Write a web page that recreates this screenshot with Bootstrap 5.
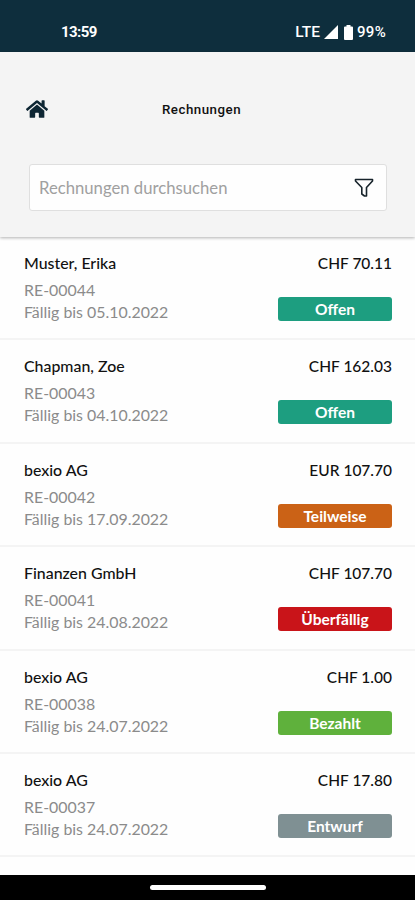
<!DOCTYPE html>
<html lang="de">
<head>
<meta charset="utf-8">
<meta name="viewport" content="width=device-width, initial-scale=1">
<title>Rechnungen</title>
<link href="https://cdn.jsdelivr.net/npm/bootstrap@5.3.0/dist/css/bootstrap.min.css" rel="stylesheet">
<style>
body { font-family: Lato, "Liberation Sans", sans-serif; color: #111; }
.screen { height: 900px; background: #fefefe; }
.status-bar { height: 52px; background: #0e2e3d; padding: 22px 29px 0 61px; font: 500 15px/20px Roboto, sans-serif; color: #fff; }
.clock { letter-spacing: -.6px; font-weight: 700; }
.status-right { height: 20px; }
.lte { font-size: 15.5px; }
.signal { margin-left: 4px; }
.battery { margin-left: 6px; }
.percent { margin-left: 4px; letter-spacing: .3px; }
.app-head { height: 185px; background: #f4f4f4; box-shadow: 0 1px 3px rgba(0,0,0,.3); padding: 0 28px 0 29px; }
.title-row { height: 112px; }
.title-row svg { left: -3px; top: 47px; }
.page-title { font: 500 13.3px/18px Roboto, sans-serif; letter-spacing: .5px; padding-top: 49px; padding-right: 13px; }
.search-box { height: 47px; border: 1px solid #dfdfdf; border-radius: 3px; background: #fefefe; padding: 0 12px 0 9px; }
.search-box input { font-size: 16.7px; color: #999; line-height: 22px; }
.search-box input::placeholder { color: #a0a0a0; opacity: 1; }
.invoice { height: 103.4px; border-bottom: 2px solid #f4f4f4; padding: 15px 23px 0 24px; line-height: 22px; }
.who, .amount { font-size: 15.5px; font-weight: 500; color: #111; }
.who { font-size: 15.9px; }
.meta { font-size: 15.9px; color: #8b8b8b; margin-top: 5px; }
.state { width: 114px; height: 24px; border-radius: 3px; font-size: 15.5px; font-weight: 700; line-height: 24px; margin-top: 23px; color: #fff; }
.open { background: #1d9e80; } .partial { background: #cb6216; } .overdue { background: #c91419; } .paid { background: #5fb13c; } .draft { background: #7f9093; }
.nav-bar { height: 25px; background: #000; }
.nav-bar span { width: 116px; height: 5px; background: #fff; }
</style>
<script src="https://cdn.jsdelivr.net/npm/bootstrap@5.3.0/dist/js/bootstrap.bundle.min.js"></script>
</head>
<body>
<div class="screen d-flex flex-column overflow-hidden">
  <div class="status-bar d-flex justify-content-between flex-shrink-0">
    <span class="clock">13:59</span>
    <div class="d-flex align-items-center status-right">
      <span class="lte">LTE</span>
      <svg class="signal flex-shrink-0" width="14" height="14" viewBox="0 0 14 14"><path d="M14 0V14H0Z" fill="#fff"/></svg>
      <svg class="battery flex-shrink-0" width="9" height="15" viewBox="0 0 9 15"><path d="M2.500 0h4v1.500H8q1 0 1 1V14q0 1-1 1H1q-1 0-1-1V2.500q0-1 1-1h1.500z" fill="#fff"/></svg>
      <span class="percent">99%</span>
    </div>
  </div>
  <header class="app-head flex-shrink-0 position-relative">
    <div class="title-row position-relative">
      <svg class="position-absolute" width="22" height="20" viewBox="0 0 576 512" preserveAspectRatio="none"><path fill="#0e2633" d="M280.370 148.260L96 300.110V464a16 16 0 0 0 16 16l112.060-.29a16 16 0 0 0 15.920-16V368a16 16 0 0 1 16-16h64a16 16 0 0 1 16 16v95.640a16 16 0 0 0 16 16.050L464 480a16 16 0 0 0 16-16V300L295.670 148.260a12.190 12.190 0 0 0-15.300 0zM571.600 251.470L488 182.560V44.050a12 12 0 0 0-12-12h-56a12 12 0 0 0-12 12v72.610L318.470 43a48 48 0 0 0-61 0L4.340 251.470a12 12 0 0 0-1.600 16.900l25.500 31A12 12 0 0 0 45.150 301l235.220-193.740a12.190 12.190 0 0 1 15.300 0L530.900 301a12 12 0 0 0 16.900-1.600l25.500-31a12 12 0 0 0-1.700-16.930z"/></svg>
      <h1 class="page-title text-center mb-0">Rechnungen</h1>
    </div>
    <div class="search-box d-flex align-items-center">
      <input class="flex-grow-1 border-0 bg-transparent p-0" type="text" placeholder="Rechnungen durchsuchen">
      <svg class="funnel flex-shrink-0" width="20" height="20" viewBox="0 0 20 20"><path d="M1.500 1.500H18.500V3L12.500 9.500V18H10.500L7.800 16V9.500L1.500 3Z" fill="none" stroke="#17232b" stroke-width="1.600" stroke-linejoin="round"/></svg>
    </div>
  </header>
  <main class="flex-grow-1 overflow-hidden list">
    <div class="invoice d-flex justify-content-between"><div><div class="who">Muster, Erika</div><div class="meta">RE-00044<br>Fällig bis 05.10.2022</div></div><div class="text-end"><div class="amount">CHF 70.11</div><div class="state open text-center">Offen</div></div></div>
    <div class="invoice d-flex justify-content-between"><div><div class="who">Chapman, Zoe</div><div class="meta">RE-00043<br>Fällig bis 04.10.2022</div></div><div class="text-end"><div class="amount">CHF 162.03</div><div class="state open text-center">Offen</div></div></div>
    <div class="invoice d-flex justify-content-between"><div><div class="who">bexio AG</div><div class="meta">RE-00042<br>Fällig bis 17.09.2022</div></div><div class="text-end"><div class="amount">EUR 107.70</div><div class="state partial text-center">Teilweise</div></div></div>
    <div class="invoice d-flex justify-content-between"><div><div class="who">Finanzen GmbH</div><div class="meta">RE-00041<br>Fällig bis 24.08.2022</div></div><div class="text-end"><div class="amount">CHF 107.70</div><div class="state overdue text-center">Überfällig</div></div></div>
    <div class="invoice d-flex justify-content-between"><div><div class="who">bexio AG</div><div class="meta">RE-00038<br>Fällig bis 24.07.2022</div></div><div class="text-end"><div class="amount">CHF 1.00</div><div class="state paid text-center">Bezahlt</div></div></div>
    <div class="invoice d-flex justify-content-between"><div><div class="who">bexio AG</div><div class="meta">RE-00037<br>Fällig bis 24.07.2022</div></div><div class="text-end"><div class="amount">CHF 17.80</div><div class="state draft text-center">Entwurf</div></div></div>
  </main>
  <footer class="nav-bar d-flex align-items-center justify-content-center flex-shrink-0"><span class="rounded-pill"></span></footer>
</div>
</body>
</html>
